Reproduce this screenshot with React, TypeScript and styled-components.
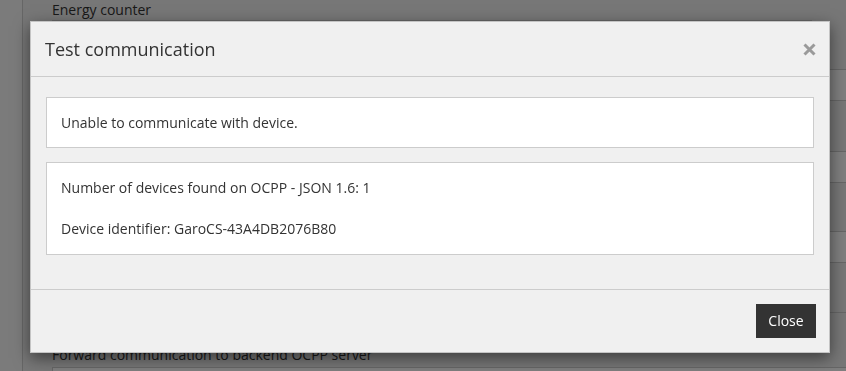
import React from "react";
import styled, { createGlobalStyle } from "styled-components";

const Global = createGlobalStyle`
  html, body { margin: 0; padding: 0; }
  body {
    width: 846px;
    height: 371px;
    overflow: hidden;
    background: #eeeeee;
    font-family: "Open Sans", "Liberation Sans", sans-serif;
    font-size: 14px;
    line-height: 20px;
    color: #333;
  }
  * { box-sizing: border-box; }
`;

const Page = styled.div`
  display: flex;
  width: 846px;
  height: 371px;
  overflow: hidden;
  position: relative;
`;

const Sidebar = styled.div`
  width: 23px;
  flex: none;
  background: #f6f6f6;
  border-right: 1px solid #cccccc;
`;

const Content = styled.div`
  flex: 1;
  display: flex;
  flex-direction: column;
  padding-left: 29px;
  min-width: 0;
`;

const FieldLabel = styled.div<{ $mt: number }>`
  margin-top: ${(p) => p.$mt}px;
  height: 20px;
  line-height: 20px;
  font-size: 14px;
  color: #333;
  white-space: nowrap;
`;

const Input = styled.div<{ $mt: number; $w?: number }>`
  margin-top: ${(p) => p.$mt}px;
  width: ${(p) => (p.$w ? `${p.$w}px` : "900px")};
  height: 32px;
  flex: none;
  background: #ffffff;
  border: 1px solid #cccccc;
`;

const Divider = styled.div<{ $mt: number }>`
  margin-top: ${(p) => p.$mt}px;
  width: 900px;
  height: 1px;
  flex: none;
  background: #cccccc;
`;

const Backdrop = styled.div`
  position: fixed;
  inset: 0;
  background: rgba(0, 0, 0, 0.5);
`;

const Modal = styled.div`
  position: absolute;
  left: 30px;
  top: 21px;
  width: 800px;
  background: #f0f0f0;
  border: 1px solid #c4c4c4;
  box-shadow: 0 5px 15px rgba(0, 0, 0, 0.5);
  display: flex;
  flex-direction: column;
`;

const Header = styled.div`
  display: flex;
  align-items: center;
  justify-content: space-between;
  height: 55px;
  padding: 0 13px 0 14px;
  border-bottom: 1px solid #cccccc;
`;

const Title = styled.h4`
  margin: 0;
  font-size: 18px;
  line-height: 24px;
  font-weight: 400;
  color: #333;
`;

const CloseX = styled.button`
  border: 0;
  background: transparent;
  padding: 0;
  width: 14px;
  height: 14px;
  display: flex;
  align-items: center;
  justify-content: center;
  color: #9a9a9a;
  cursor: pointer;
`;

const Body = styled.div`
  padding: 20px 15px 34px;
  display: flex;
  flex-direction: column;
  gap: 14px;
`;

const MessageBox = styled.div<{ $pb: number }>`
  background: #ffffff;
  border: 1px solid #cccccc;
  padding: 15px 14px ${(p) => p.$pb}px;
`;

const Line = styled.p`
  margin: 0 0 21px;
  font-size: 14px;
  line-height: 20px;
  color: #333;
  &:last-child { margin-bottom: 0; }
`;

const Footer = styled.div`
  display: flex;
  justify-content: flex-end;
  padding: 14px 13px;
  border-top: 1px solid #cccccc;
`;

const Button = styled.button`
  height: 34px;
  width: 60px;
  padding: 0;
  border: 0;
  border-radius: 0;
  background: #333333;
  color: #ffffff;
  font-family: "Open Sans", "Liberation Sans", sans-serif;
  font-size: 14px;
  line-height: 20px;
  cursor: pointer;
`;

export default function App() {
  return (
    <>
      <Global />
      <Page>
        <Sidebar />
        <Content>
          <FieldLabel $mt={0}>Energy counter</FieldLabel>
          <Input $mt={0} $w={760} />
          <Input $mt={17} />
          <Input $mt={50} />
          <Input $mt={48} />
          <Divider $mt={49} />
          <FieldLabel $mt={32}>Forward communication to backend OCPP server</FieldLabel>
          <Input $mt={2} />
        </Content>
        <Backdrop />
        <Modal>
          <Header>
            <Title>Test communication</Title>
            <CloseX aria-label="Close">
              <svg width="13" height="13" viewBox="0 0 13 13">
                <path
                  d="M1.5 1.5 L11.5 11.5 M11.5 1.5 L1.5 11.5"
                  stroke="currentColor"
                  strokeWidth="3"
                  strokeLinecap="butt"
                />
              </svg>
            </CloseX>
          </Header>
          <Body>
            <MessageBox $pb={14}>
              <Line>Unable to communicate with device.</Line>
            </MessageBox>
            <MessageBox $pb={15}>
              <Line>Number of devices found on OCPP - JSON 1.6: 1</Line>
              <Line>Device identifier: GaroCS-43A4DB2076B80</Line>
            </MessageBox>
          </Body>
          <Footer>
            <Button>Close</Button>
          </Footer>
        </Modal>
      </Page>
    </>
  );
}
